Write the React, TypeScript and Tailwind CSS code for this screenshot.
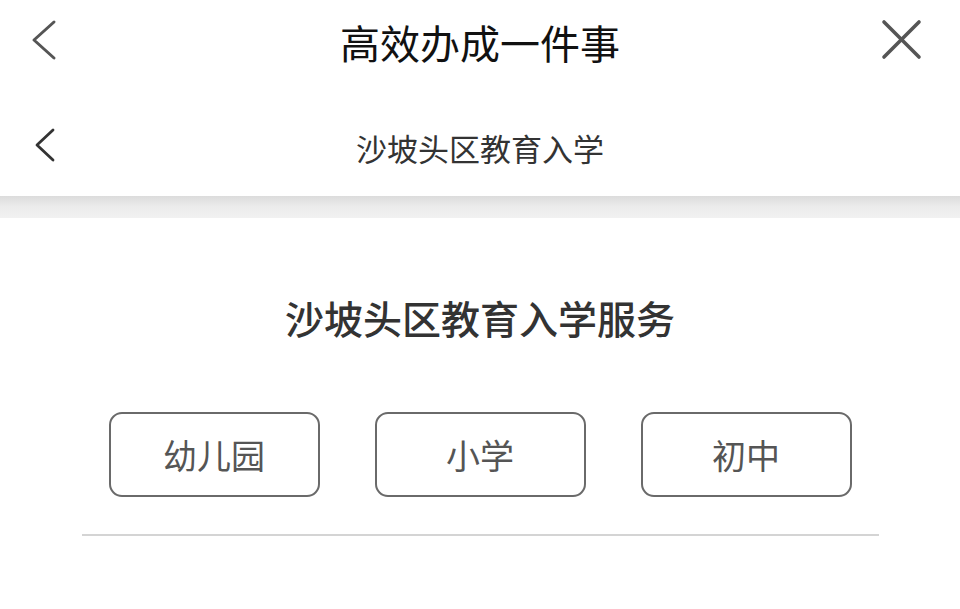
const font = { fontFamily: '"Noto Sans CJK SC", "Noto Sans", sans-serif' };

export default function App() {
  const grades = ['幼儿园', '小学', '初中'];

  return (
    <div className="w-[960px] h-[609px] bg-white overflow-hidden" style={font}>
      {/* Top bar */}
      <div className="relative h-[98px] flex items-center justify-center">
        <button className="absolute left-[30px] top-[18px] text-[#555]">
          <svg width="30" height="44" viewBox="0 0 30 44" fill="none" stroke="currentColor" strokeWidth="3" strokeLinecap="round" strokeLinejoin="round">
            <polyline points="24,4 4,22 24,40" />
          </svg>
        </button>
        <h1 className="text-[40px] text-[#111] leading-none -mt-[14px]">高效办成一件事</h1>
        <button className="absolute left-[878px] top-[16px] text-[#555]">
          <svg width="48" height="48" viewBox="0 0 48 48" fill="none" stroke="currentColor" strokeWidth="3.6" strokeLinecap="round">
            <line x1="6" y1="6" x2="41" y2="41" />
            <line x1="41" y1="6" x2="6" y2="41" />
          </svg>
        </button>
      </div>

      {/* Sub header */}
      <div className="relative h-[98px] flex items-center justify-center">
        <button className="absolute left-[33px] top-[28px] text-[#333]">
          <svg width="26" height="38" viewBox="0 0 26 38" fill="none" stroke="currentColor" strokeWidth="2.8" strokeLinecap="round" strokeLinejoin="round">
            <polyline points="20,4 4,19 20,34" />
          </svg>
        </button>
        <h2 className="text-[31px] text-[#333] leading-none">沙坡头区教育入学</h2>
      </div>

      {/* Gray band */}
      <div className="h-[22px] bg-gradient-to-b from-[#dcdcdc] via-[#ececec] to-[#f1f1f1]" />

      {/* Content */}
      <div className="flex flex-col items-center">
        <h3 className="mt-[80px] text-[39px] font-medium text-[#333] leading-none">
          沙坡头区教育入学服务
        </h3>
        <div className="mt-[75px] flex gap-[55px]">
          {grades.map(g => (
            <button
              key={g}
              className="w-[211px] h-[85px] rounded-[13px] border-2 border-[#6a6a6a] text-[34px] text-[#555] flex items-center justify-center"
            >
              {g}
            </button>
          ))}
        </div>
        <div className="mt-[37px] w-[797px] h-[2px] bg-[#d4d4d4]" />
      </div>
    </div>
  );
}
